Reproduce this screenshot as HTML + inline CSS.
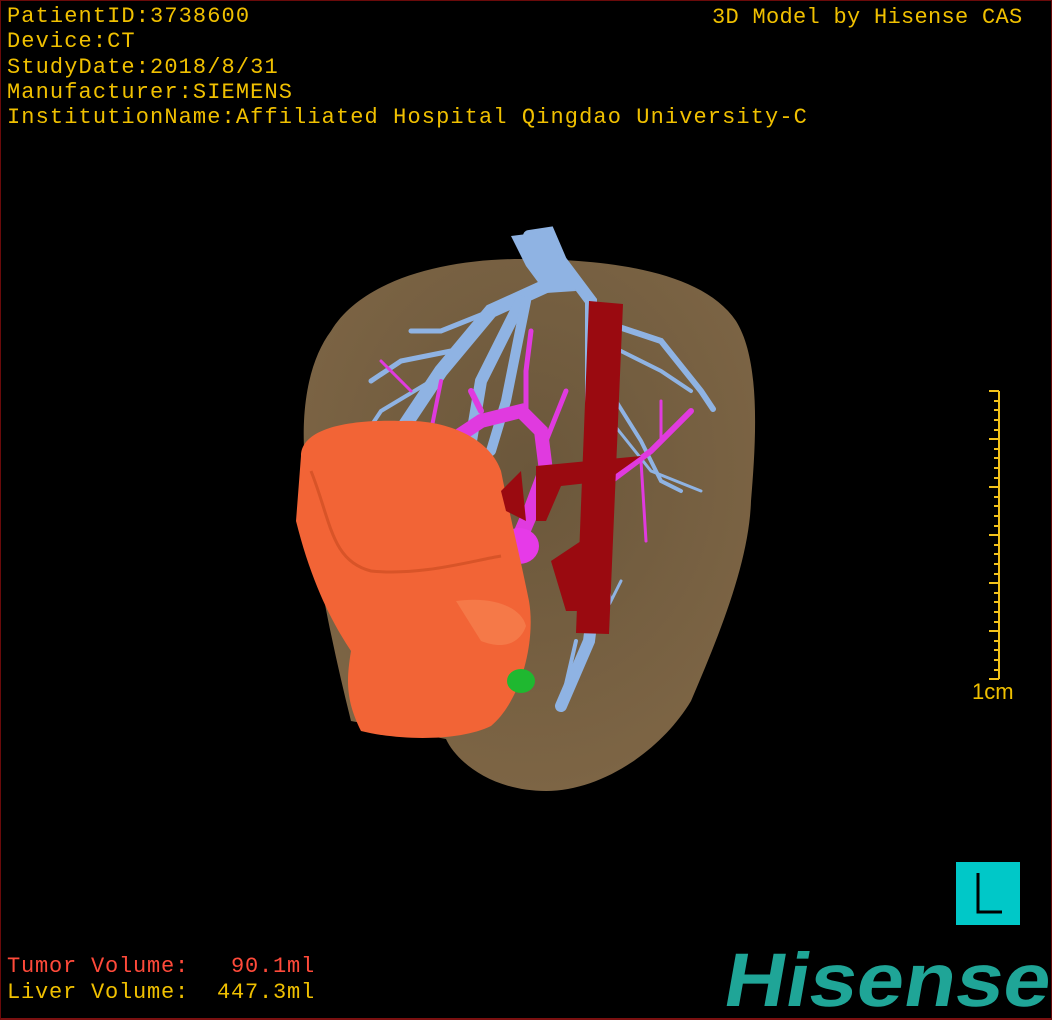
<!DOCTYPE html>
<html><head><meta charset="utf-8"><style>
html,body{margin:0;padding:0;background:#000;}
#f{position:relative;width:1052px;height:1020px;background:#000;overflow:hidden;box-sizing:border-box;border:1px solid #6a0a0a;border-bottom:2px solid #7a1010;}
.t{position:absolute;font-family:"Liberation Mono",monospace;font-size:22px;color:#f0c000;letter-spacing:1.1px;white-space:pre;line-height:25.3px;}
</style></head><body><div id="f">
<div class="t" style="left:6px;top:3px">PatientID:3738600
Device:CT
StudyDate:2018/8/31
Manufacturer:SIEMENS
InstitutionName:Affiliated Hospital Qingdao University-C</div>
<div class="t" style="left:711px;top:4px;letter-spacing:0.3px">3D Model by Hisense CAS</div>
<div class="t" style="left:6px;top:953px;color:#ff4a3a;letter-spacing:0.8px">Tumor Volume:   90.1ml</div>
<div class="t" style="left:6px;top:979px;letter-spacing:0.8px">Liver Volume:  447.3ml</div>
<div class="t" style="left:971px;top:678px;letter-spacing:0;font-family:'Liberation Sans',sans-serif">1cm</div>
<svg width="1052" height="1020" style="position:absolute;left:0;top:0">
<defs><radialGradient id="lg" cx="0.5" cy="0.4" r="0.6"><stop offset="0" stop-color="#6b573b"/><stop offset="1" stop-color="#7d6545"/></radialGradient></defs>
<path d="M330,330 C360,280 440,258 520,258 C600,258 700,268 735,320 C760,360 755,440 750,500 C748,560 720,630 690,700 C660,750 600,790 545,790 C490,790 455,760 445,738 L350,720 C320,600 300,480 303,420 C305,380 315,350 330,330Z" fill="url(#lg)"/>
<g stroke="#8fb3e3" stroke-linecap="round" fill="none">
<path d="M528,235 L548,232 L560,260 L590,300 L590,420 L598,560 L588,640 L560,705" stroke-width="12"/>
<path d="M545,285 L490,310 L440,370 L400,430 L375,470" stroke-width="14"/>
<path d="M520,300 L480,380 L470,440" stroke-width="12"/>
<path d="M525,300 L505,400 L490,450" stroke-width="10"/>
<path d="M490,310 L440,330 L410,330" stroke-width="5"/>
<path d="M450,350 L400,360 L370,380" stroke-width="5"/>
<path d="M430,380 L380,410 L360,440" stroke-width="4"/>
<path d="M600,320 L660,340 L700,390 L712,408" stroke-width="6"/>
<path d="M620,350 L660,370 L690,390" stroke-width="4"/>
<path d="M615,400 L640,440 L660,480 L680,490" stroke-width="4"/>
<path d="M610,420 L650,470 L700,490" stroke-width="3"/>
<path d="M600,560 L610,600 L620,580" stroke-width="3"/>
<path d="M560,705 L575,640" stroke-width="4"/>
</g>
<path d="M510,235 L550,230 L560,262 L575,290 L545,292 L525,265Z" fill="#8fb3e3"/>
<g stroke="#e03adf" stroke-linecap="round" fill="none">
<path d="M395,450 L450,440 L480,420 L520,410 L540,430 L545,470" stroke-width="14"/>
<path d="M545,470 L530,510 L515,545" stroke-width="16"/>
<path d="M470,390 L480,410" stroke-width="6"/>
<path d="M525,410 L525,370 L530,330" stroke-width="5"/>
<path d="M545,440 L565,390" stroke-width="5"/>
<path d="M440,380 L430,430" stroke-width="4"/>
<path d="M380,360 L410,390" stroke-width="3"/>
<path d="M610,480 L650,450 L690,410" stroke-width="6"/>
<path d="M640,460 L645,540" stroke-width="3"/>
<path d="M660,440 L660,400" stroke-width="3"/>
</g>
<ellipse cx="518" cy="545" rx="20" ry="18" fill="#e63ae8"/>
<path d="M300,455 C300,430 340,418 400,420 C450,418 490,440 500,470 C510,520 520,560 528,600 C535,640 520,700 490,725 C460,740 400,740 360,730 C345,700 345,680 350,650 C330,620 310,580 295,520Z" fill="#f26436"/>
<path d="M310,470 C330,520 330,560 370,570 C420,575 470,560 500,555" stroke="#d85428" stroke-width="3" fill="none"/>
<path d="M455,600 C490,595 520,605 525,625 C520,640 505,650 480,640Z" fill="#f78250" opacity="0.7"/>
<ellipse cx="520" cy="680" rx="14" ry="12" fill="#1fb830"/>
<g fill="#9a0a10">
<path d="M588,300 L622,303 L608,633 L575,632Z"/>
<path d="M535,465 L640,455 L605,480 L560,485 L545,520 L535,520Z"/>
<path d="M500,490 L520,470 L525,520 L505,510Z"/>
<path d="M550,560 L580,540 L590,610 L565,610Z"/>
</g>
<g stroke="#f2c21a" stroke-width="2">
<line x1="998" y1="390" x2="998" y2="678"/>
<line x1="988" y1="390" x2="998" y2="390"/>
<line x1="993" y1="400" x2="998" y2="400"/><line x1="993" y1="409" x2="998" y2="409"/><line x1="993" y1="419" x2="998" y2="419"/><line x1="993" y1="429" x2="998" y2="429"/>
<line x1="988" y1="438" x2="998" y2="438"/>
<line x1="993" y1="448" x2="998" y2="448"/><line x1="993" y1="457" x2="998" y2="457"/><line x1="993" y1="467" x2="998" y2="467"/><line x1="993" y1="477" x2="998" y2="477"/>
<line x1="988" y1="486" x2="998" y2="486"/>
<line x1="993" y1="496" x2="998" y2="496"/><line x1="993" y1="505" x2="998" y2="505"/><line x1="993" y1="515" x2="998" y2="515"/><line x1="993" y1="525" x2="998" y2="525"/>
<line x1="988" y1="534" x2="998" y2="534"/>
<line x1="993" y1="544" x2="998" y2="544"/><line x1="993" y1="553" x2="998" y2="553"/><line x1="993" y1="563" x2="998" y2="563"/><line x1="993" y1="573" x2="998" y2="573"/>
<line x1="988" y1="582" x2="998" y2="582"/>
<line x1="993" y1="592" x2="998" y2="592"/><line x1="993" y1="601" x2="998" y2="601"/><line x1="993" y1="611" x2="998" y2="611"/><line x1="993" y1="621" x2="998" y2="621"/>
<line x1="988" y1="630" x2="998" y2="630"/>
<line x1="993" y1="640" x2="998" y2="640"/><line x1="993" y1="649" x2="998" y2="649"/><line x1="993" y1="659" x2="998" y2="659"/><line x1="993" y1="669" x2="998" y2="669"/>
<line x1="988" y1="678" x2="998" y2="678"/>
</g>
<rect x="955" y="861" width="64" height="63" fill="#00c8c8"/>
<path d="M977,872 L977,911 L1001,911" stroke="#000" stroke-width="3" fill="none"/>
<text transform="translate(720,1005) skewX(-10)" font-family="Liberation Sans,sans-serif" font-weight="bold" font-size="76" fill="#1fa597" textLength="326" lengthAdjust="spacingAndGlyphs">Hisense</text>
</svg>
</div></body></html>
